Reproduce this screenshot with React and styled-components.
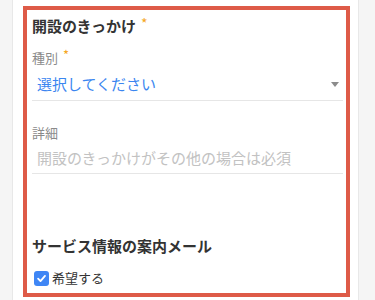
import React from "react";
import styled, { createGlobalStyle } from "styled-components";

const GlobalStyle = createGlobalStyle`
  html, body {
    margin: 0;
    padding: 0;
    background: #f5f5f5;
    font-family: "Noto Sans CJK JP", "Noto Sans", sans-serif;
  }
`;

const StyledPage = styled.div`
  height: 300px;
  overflow: hidden;
`;
const StyledCard = styled.div`
  margin-left: 12px;
  width: 327px;
  min-height: 300px;
  background: #fff;
  border-left: 1px solid #e8e8e8;
  border-right: 1px solid #e8e8e8;
  padding: 6px 8px 0 10px;
`;
const StyledHighlight = styled.div`
  border: 4px solid #de5b48;
  padding: 5px 3px 5px 5px;
`;
const StyledTitle = styled.div`
  height: 22px;
  font-size: 15px;
  line-height: 22px;
  font-weight: bold;
  color: #333;
  margin-top: ${({ $top }) => $top || 0}px;
`;
const StyledRequired = styled.span`
  display: inline-block;
  line-height: 1;
  color: #f5a623;
  font-weight: normal;
  font-size: ${({ $size }) => $size || 13}px;
  margin-left: 5px;
  vertical-align: 3px;
`;
const StyledLabel = styled.div`
  height: 20px;
  font-size: 13px;
  line-height: 20px;
  color: #8a8a8a;
  margin-top: ${({ $top }) => $top}px;
`;
const StyledField = styled.div`
  display: flex;
  align-items: center;
  justify-content: space-between;
  height: ${({ $height }) => $height}px;
  border-bottom: 1px solid #e6e6e6;
  padding: 0 4px 0 5px;
  font-size: 15px;
  line-height: 20px;
  color: ${({ $placeholder }) => ($placeholder ? "#c2c2c2" : "#3b86f0")};
`;
const StyledArrow = styled.span`
  width: 0;
  height: 0;
  border-left: 4px solid transparent;
  border-right: 4px solid transparent;
  border-top: 5px solid #8c8c8c;
`;
const StyledCheckRow = styled.label`
  display: flex;
  align-items: center;
  gap: 3px;
  height: 20px;
  margin-top: 11px;
  padding-left: 2px;
  font-size: 13px;
  line-height: 20px;
  color: #333;
`;
const StyledCheckbox = styled.span`
  display: flex;
  align-items: center;
  justify-content: center;
  width: 15px;
  height: 15px;
  border-radius: 3px;
  background: #3f86f5;
`;

const App = () => {
  return (
    <StyledPage>
      <GlobalStyle />
      <StyledCard>
        <StyledHighlight>
          <StyledTitle>
            開設のきっかけ<StyledRequired $size={14}>*</StyledRequired>
          </StyledTitle>
          <StyledLabel $top={11}>
            種別<StyledRequired>*</StyledRequired>
          </StyledLabel>
          <StyledField $height={32}>
            選択してください
            <StyledArrow />
          </StyledField>
          <StyledLabel $top={22}>詳細</StyledLabel>
          <StyledField $height={30} $placeholder>
            開設のきっかけがその他の場合は必須
          </StyledField>
          <StyledTitle $top={61}>サービス情報の案内メール</StyledTitle>
          <StyledCheckRow>
            <StyledCheckbox>
              <svg width="11" height="11" viewBox="0 0 12 12">
                <path
                  d="M2.3 6.2 L4.9 8.8 L9.8 3.2"
                  fill="none"
                  stroke="#fff"
                  strokeWidth="2"
                  strokeLinecap="round"
                  strokeLinejoin="round"
                />
              </svg>
            </StyledCheckbox>
            希望する
          </StyledCheckRow>
        </StyledHighlight>
      </StyledCard>
    </StyledPage>
  );
};

export default App;
